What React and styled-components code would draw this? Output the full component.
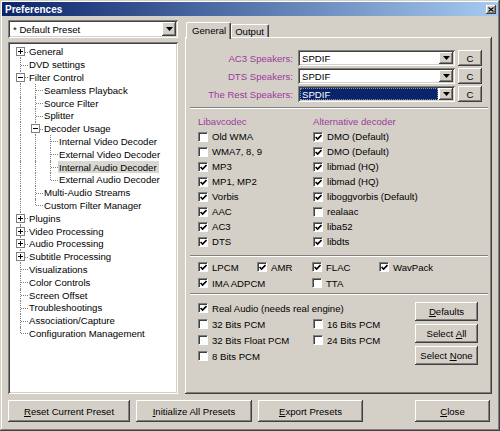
import React from "react";
import styled, { createGlobalStyle, css } from "styled-components";

const GlobalStyle = createGlobalStyle`
  html, body {
    margin: 0;
    padding: 0;
    background: #d4d0c8;
  }
  body {
    font-family: "Liberation Sans", Arial, sans-serif;
    font-size: 9.6px;
    color: #000;
  }
  * {
    box-sizing: border-box;
  }
`;

const raised = css`
  background: #d4d0c8;
  box-shadow: inset -1px -1px #404040, inset 1px 1px #ffffff,
    inset -2px -2px #808080, inset 2px 2px #d4d0c8;
`;

const sunken = css`
  box-shadow: inset 1px 1px #808080, inset -1px -1px #ffffff,
    inset 2px 2px #404040, inset -2px -2px #d4d0c8;
`;

const PURPLE = "#9c3a9c";

const Window = styled.div`
  width: 500px;
  height: 431px;
  padding: 2px;
  display: flex;
  flex-direction: column;
  background: #d4d0c8;
  box-shadow: inset -1px -1px #404040, inset 1px 1px #d4d0c8,
    inset -2px -2px #808080, inset 2px 2px #ffffff;
`;

const TitleBar = styled.div`
  height: 14px;
  display: flex;
  align-items: center;
  justify-content: space-between;
  padding: 0 2px 0 3px;
  background: linear-gradient(to right, #0a246a, #a6caf0);
  color: #fff;
  font-weight: bold;
  font-size: 10px;
`;

const TitleButton = styled.span`
  width: 10px;
  height: 9px;
  display: flex;
  align-items: center;
  justify-content: center;
  ${raised};
`;

const Body = styled.div`
  flex: 1;
  display: flex;
  flex-direction: column;
  padding: 4px 6px 0 6px;
`;

const Main = styled.div`
  display: flex;
  gap: 7px;
  height: 374px;
`;

const LeftCol = styled.div`
  width: 170px;
  display: flex;
  flex-direction: column;
  gap: 4px;
`;

const RightCol = styled.div`
  flex: 1;
  display: flex;
  flex-direction: column;
  padding-top: 2px;
`;

/* ---------- combo box ---------- */

const Combo = styled.div`
  width: ${(p) => (p.$w ? `${p.$w}px` : "auto")};
  height: ${(p) => p.$h}px;
  flex: none;
  display: flex;
  padding: 2px;
  background: #fff;
  ${sunken};
`;

const ComboText = styled.span`
  flex: 1;
  display: flex;
  align-items: center;
  padding-left: ${(p) => p.$pad}px;
  margin-right: 1px;
  white-space: nowrap;
  ${(p) =>
    p.$selected &&
    css`
      background: #0a246a;
      color: #fff;
      outline: 1px dotted #8a94b8;
      outline-offset: -1px;
    `}
`;

const DropButton = styled.span`
  width: 14px;
  flex: none;
  display: flex;
  align-items: center;
  justify-content: center;
  ${raised};
`;

function ComboBox({ value, width, height = 16, pad = 3, selected }) {
  return (
    <Combo $w={width} $h={height}>
      <ComboText $pad={pad} $selected={selected}>
        {value}
      </ComboText>
      <DropButton>
        <svg width="7" height="4" viewBox="0 0 7 4">
          <polygon points="0,0 7,0 3.5,4" fill="#000" />
        </svg>
      </DropButton>
    </Combo>
  );
}

/* ---------- tree ---------- */

const Tree = styled.div`
  flex: 1;
  background: #fff;
  padding: 3.5px 2px 0 5px;
  ${sunken};
`;

const TreeRow = styled.div`
  display: flex;
  height: 12.8px;
`;

const Guide = styled.span`
  width: 15px;
  flex: none;
  position: relative;
  display: flex;
  align-items: center;
  justify-content: center;

  &::before {
    content: "";
    display: ${(p) => (p.$kind === "blank" ? "none" : "block")};
    position: absolute;
    left: 7px;
    top: ${(p) => (p.$kind === "first" ? "50%" : "0")};
    bottom: ${(p) => (p.$kind === "corner" ? "50%" : "0")};
    border-left: 1px dotted #808080;
  }

  &::after {
    content: "";
    display: ${(p) => (p.$kind === "blank" || p.$kind === "pipe" ? "none" : "block")};
    position: absolute;
    left: 8px;
    right: 0;
    top: 50%;
    border-top: 1px dotted #808080;
  }
`;

const Expander = styled.span`
  width: 9px;
  height: 9px;
  position: relative;
  z-index: 1;
  display: flex;
  align-items: center;
  justify-content: center;
  background: #fff;
  border: 1px solid #808080;
`;

const TreeLabel = styled.span`
  display: flex;
  align-items: center;
  padding: 0 2px 0 1px;
  white-space: nowrap;
  background: ${(p) => (p.$selected ? "#d9d7d1" : "transparent")};
`;

const treeData = [
  { label: "General", closed: true },
  { label: "DVD settings" },
  {
    label: "Filter Control",
    children: [
      { label: "Seamless Playback" },
      { label: "Source Filter" },
      { label: "Splitter" },
      {
        label: "Decoder Usage",
        children: [
          { label: "Internal Video Decoder" },
          { label: "External Video Decoder" },
          { label: "Internal Audio Decoder", selected: true },
          { label: "External Audio Decoder" },
        ],
      },
      { label: "Multi-Audio Streams" },
      { label: "Custom Filter Manager" },
    ],
  },
  { label: "Plugins", closed: true },
  { label: "Video Processing", closed: true },
  { label: "Audio Processing", closed: true },
  { label: "Subtitle Processing", closed: true },
  { label: "Visualizations" },
  { label: "Color Controls" },
  { label: "Screen Offset" },
  { label: "Troubleshootings" },
  { label: "Association/Capture" },
  { label: "Configuration Management" },
];

function flatten(nodes, trail = [], out = []) {
  nodes.forEach((node, i) => {
    const last = i === nodes.length - 1;
    const first = trail.length === 0 && i === 0;
    const guides = trail.map((l) => (l ? "blank" : "pipe"));
    guides.push(first ? "first" : last ? "corner" : "tee");
    out.push({ ...node, guides });
    if (node.children) flatten(node.children, [...trail, last], out);
  });
  return out;
}

const treeRows = flatten(treeData);

function Sign({ plus }) {
  return (
    <svg width="5" height="5" viewBox="0 0 5 5" shapeRendering="crispEdges">
      <rect x="0" y="2" width="5" height="1" fill="#000" />
      {plus && <rect x="2" y="0" width="1" height="5" fill="#000" />}
    </svg>
  );
}

/* ---------- tabs ---------- */

const TabStrip = styled.div`
  display: flex;
  align-items: flex-end;
  height: 15px;
  padding-left: 1px;
`;

const Tab = styled.div`
  height: 13px;
  display: flex;
  align-items: center;
  padding: 0 4px 0 3px;
  border-top: 1px solid #fff;
  border-left: 1px solid #fff;
  border-right: 1px solid #404040;
  border-radius: 2px 2px 0 0;
  box-shadow: inset -1px 0 #808080;
  ${(p) =>
    p.$active &&
    css`
      height: 17px;
      margin-bottom: -2px;
      padding: 0 4px 2px 5px;
      background: #d4d0c8;
      position: relative;
      z-index: 1;
    `}
`;

const Panel = styled.div`
  flex: 1;
  display: flex;
  flex-direction: column;
  padding: 2px;
  ${raised};
`;

/* ---------- speakers ---------- */

const Speakers = styled.div`
  display: flex;
  flex-direction: column;
  gap: 2px;
  padding: 11px 8px 0 0;
`;

const SpeakerRow = styled.div`
  display: flex;
  align-items: center;
  height: 16px;
`;

const PurpleText = styled.span`
  color: ${PURPLE};
  white-space: nowrap;
`;

const SpeakerLabel = styled(PurpleText)`
  flex: 1;
  text-align: right;
  margin-right: 5px;
`;

const Button = styled.button`
  width: ${(p) => p.$w}px;
  height: ${(p) => p.$h}px;
  margin-left: ${(p) => p.$ml || 0}px;
  flex: none;
  padding: 0;
  border: none;
  font: inherit;
  color: #000;
  display: flex;
  align-items: center;
  justify-content: center;
  ${raised};
`;

const Separator = styled.div`
  height: 2px;
  flex: none;
  margin: ${(p) => p.$mt}px 2px 0 3px;
  border-top: 1px solid #808080;
  border-bottom: 1px solid #fff;
`;

/* ---------- checkboxes ---------- */

const CheckRow = styled.label`
  display: flex;
  align-items: center;
  gap: 4px;
  height: ${(p) => p.$h}px;
  white-space: nowrap;
  grid-column: ${(p) => p.$col || "auto"};
`;

const CheckBox = styled.span`
  width: 10px;
  height: 10px;
  flex: none;
  display: flex;
  align-items: center;
  justify-content: center;
  padding: 1px 0 0 1px;
  background: #fff;
  border: 1px solid;
  border-color: #808080 #fff #fff #808080;
  box-shadow: inset 1px 1px #404040;
`;

function Check({ label, checked, h = 15, col }) {
  return (
    <CheckRow $h={h} $col={col}>
      <CheckBox>
        {checked && (
          <svg width="7" height="7" viewBox="0 0 7 7">
            <path d="M0.6 3 L2.6 5.1 L6.5 1" stroke="#000" strokeWidth="1.6" fill="none" />
          </svg>
        )}
      </CheckBox>
      {label}
    </CheckRow>
  );
}

const CodecSection = styled.div`
  display: grid;
  grid-template-columns: 115px 1fr;
  padding: 5px 0 0 11px;
`;

const CodecColumn = styled.div`
  display: flex;
  flex-direction: column;
`;

const ColumnHeader = styled(PurpleText)`
  height: 15px;
  display: flex;
  align-items: center;
`;

const MiscGrid = styled.div`
  display: grid;
  grid-template-columns: 59px 55px 67px 1fr;
  grid-auto-rows: 16px;
  padding: 2px 0 0 11px;
`;

const PcmSection = styled.div`
  display: flex;
  padding: 5px 12px 0 11px;
`;

const PcmGrid = styled.div`
  display: grid;
  grid-template-columns: 115px auto;
  grid-auto-rows: 16px;
  align-content: start;
`;

const ButtonStack = styled.div`
  margin-left: auto;
  display: flex;
  flex-direction: column;
  gap: 3px;
  padding-top: 2px;
`;

const BottomBar = styled.div`
  display: flex;
  gap: 6px;
  margin-top: 6px;
  padding-right: 2px;
`;

const Spacer = styled.div`
  flex: 1;
`;

const libav = [
  ["Old WMA", false],
  ["WMA7, 8, 9", false],
  ["MP3", true],
  ["MP1, MP2", true],
  ["Vorbis", true],
  ["AAC", true],
  ["AC3", true],
  ["DTS", true],
];

const altDecoders = [
  ["DMO (Default)", true],
  ["DMO (Default)", true],
  ["libmad (HQ)", true],
  ["libmad (HQ)", true],
  ["liboggvorbis (Default)", true],
  ["realaac", false],
  ["liba52", true],
  ["libdts", true],
];

const speakers = ["AC3 Speakers:", "DTS Speakers:", "The Rest Speakers:"];

export default function App() {
  return (
    <>
      <GlobalStyle />
      <Window>
        <TitleBar>
          <span>Preferences</span>
          <TitleButton>
            <svg width="6" height="5" viewBox="0 0 6 5">
              <path d="M0.5 0.5 L5.5 4.5 M5.5 0.5 L0.5 4.5" stroke="#000" strokeWidth="1.1" />
            </svg>
          </TitleButton>
        </TitleBar>

        <Body>
          <Main>
            <LeftCol>
              <ComboBox value="* Default Preset" height={18} />
              <Tree>
                {treeRows.map((row, i) => (
                  <TreeRow key={i}>
                    {row.guides.map((kind, g) => (
                      <Guide key={g} $kind={kind}>
                        {g === row.guides.length - 1 && (row.closed || row.children) && (
                          <Expander>
                            <Sign plus={row.closed} />
                          </Expander>
                        )}
                      </Guide>
                    ))}
                    <TreeLabel $selected={row.selected}>{row.label}</TreeLabel>
                  </TreeRow>
                ))}
              </Tree>
            </LeftCol>

            <RightCol>
              <TabStrip>
                <Tab $active>General</Tab>
                <Tab>Output</Tab>
              </TabStrip>
              <Panel>
                <Speakers>
                  {speakers.map((label, i) => (
                    <SpeakerRow key={label}>
                      <SpeakerLabel>{label}</SpeakerLabel>
                      <ComboBox value="SPDIF" width={157} pad={2} selected={i === 2} />
                      <Button $w={24} $h={16} $ml={3}>
                        C
                      </Button>
                    </SpeakerRow>
                  ))}
                </Speakers>

                <Separator $mt={5} />

                <CodecSection>
                  <CodecColumn>
                    <ColumnHeader>Libavcodec</ColumnHeader>
                    {libav.map(([label, on], i) => (
                      <Check key={i} label={label} checked={on} />
                    ))}
                  </CodecColumn>
                  <CodecColumn>
                    <ColumnHeader>Alternative decoder</ColumnHeader>
                    {altDecoders.map(([label, on], i) => (
                      <Check key={i} label={label} checked={on} />
                    ))}
                  </CodecColumn>
                </CodecSection>

                <Separator $mt={6} />

                <MiscGrid>
                  <Check label="LPCM" checked h={16} />
                  <Check label="AMR" checked h={16} />
                  <Check label="FLAC" checked h={16} />
                  <Check label="WavPack" checked h={16} />
                  <Check label="IMA ADPCM" checked h={16} col="1 / span 2" />
                  <Check label="TTA" h={16} col="3" />
                </MiscGrid>

                <Separator $mt={2} />

                <PcmSection>
                  <PcmGrid>
                    <Check label="Real Audio (needs real engine)" checked h={16} col="1 / span 2" />
                    <Check label="32 Bits PCM" h={16} />
                    <Check label="16 Bits PCM" h={16} />
                    <Check label="32 Bits Float PCM" h={16} />
                    <Check label="24 Bits PCM" h={16} />
                    <Check label="8 Bits PCM" h={16} />
                  </PcmGrid>
                  <ButtonStack>
                    <Button $w={63} $h={19}>
                      <u>D</u>efaults
                    </Button>
                    <Button $w={63} $h={19}>
                      Select&nbsp;<u>A</u>ll
                    </Button>
                    <Button $w={63} $h={19}>
                      Select&nbsp;<u>N</u>one
                    </Button>
                  </ButtonStack>
                </PcmSection>
              </Panel>
            </RightCol>
          </Main>

          <BottomBar>
            <Button $w={122} $h={22}>
              <u>R</u>eset Current Preset
            </Button>
            <Button $w={116} $h={22}>
              <u>I</u>nitialize All Presets
            </Button>
            <Button $w={105} $h={22}>
              <u>E</u>xport Presets
            </Button>
            <Spacer />
            <Button $w={75} $h={22}>
              <u>C</u>lose
            </Button>
          </BottomBar>
        </Body>
      </Window>
    </>
  );
}
